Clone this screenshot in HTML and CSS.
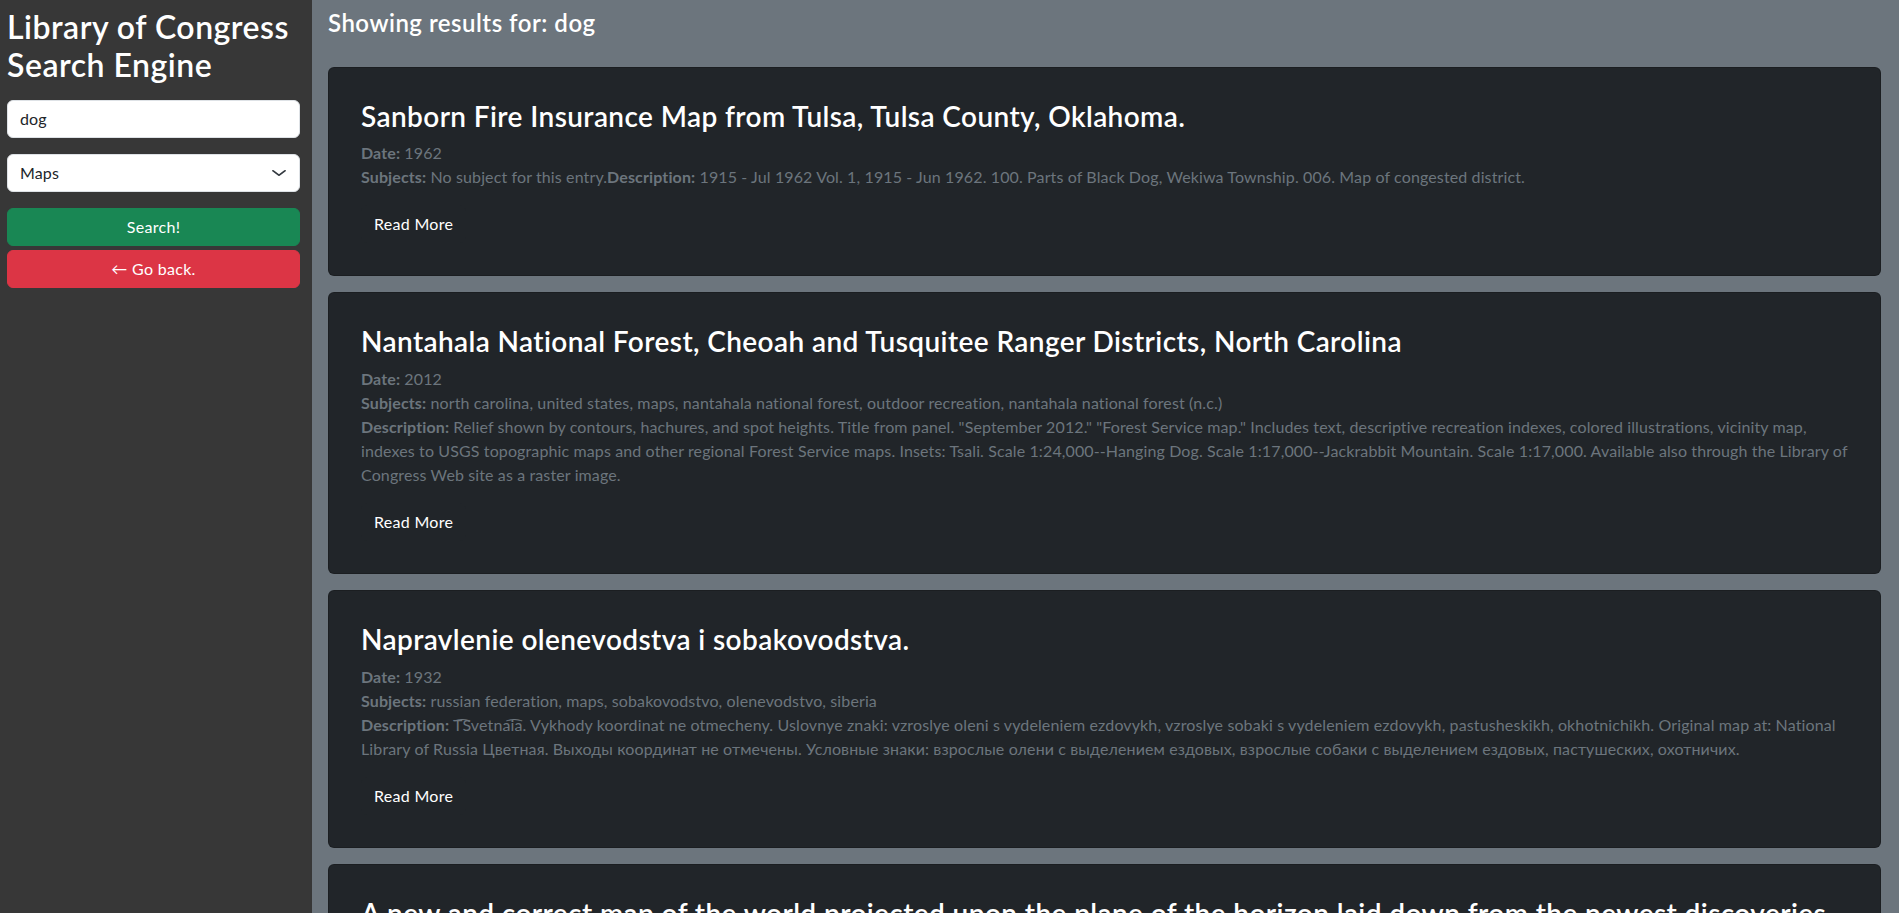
FILE: index.html
```html
<!DOCTYPE html>
<html lang="en">
<head>
<meta charset="utf-8">
<title>Library of Congress Search Engine</title>
<link rel="stylesheet" href="styles.css">
</head>
<body>
<aside class="sidebar">
  <h2 class="brand">Library of Congress Search Engine</h2>
  <form class="search-form">
    <input class="field" type="text" value="dog">
    <div class="field select">
      <span>Maps</span>
      <svg class="chevron" width="16" height="12" viewBox="0 0 16 16" preserveAspectRatio="none"><path d="m2 5 6 6 6-6" fill="none" stroke="#343a40" stroke-linecap="round" stroke-linejoin="round" stroke-width="2"/></svg>
    </div>
    <button class="btn btn-success" type="button">Search!</button>
    <button class="btn btn-danger" type="button">&larr; Go back.</button>
  </form>
</aside>
<main class="results">
  <h4 class="results-title">Showing results for: dog</h4>

  <div class="card">
    <h3 class="card-title">Sanborn Fire Insurance Map from Tulsa, Tulsa County, Oklahoma.</h3>
    <p class="meta"><b>Date:</b> 1962<br><b>Subjects:</b> No subject for this entry.<b>Description:</b> 1915 - Jul 1962 Vol. 1, 1915 - Jun 1962. 100. Parts of Black Dog, Wekiwa Township. 006. Map of congested district.</p>
    <button class="btn btn-read" type="button">Read More</button>
  </div>

  <div class="card">
    <h3 class="card-title">Nantahala National Forest, Cheoah and Tusquitee Ranger Districts, North Carolina</h3>
    <p class="meta"><b>Date:</b> 2012<br><b>Subjects:</b> north carolina, united states, maps, nantahala national forest, outdoor recreation, nantahala national forest (n.c.)<br><b>Description:</b> Relief shown by contours, hachures, and spot heights. Title from panel. "September 2012." "Forest Service map." Includes text, descriptive recreation indexes, colored illustrations, vicinity map, indexes to USGS topographic maps and other regional Forest Service maps. Insets: Tsali. Scale 1:24,000--Hanging Dog. Scale 1:17,000--Jackrabbit Mountain. Scale 1:17,000. Available also through the Library of Congress Web site as a raster image.</p>
    <button class="btn btn-read" type="button">Read More</button>
  </div>

  <div class="card">
    <h3 class="card-title">Napravlenie olenevodstva i sobakovodstva.</h3>
    <p class="meta"><b>Date:</b> 1932<br><b>Subjects:</b> russian federation, maps, sobakovodstvo, olenevodstvo, siberia<br><b>Description:</b> T͡Svetnai͡a. Vykhody koordinat ne otmecheny. Uslovnye znaki: vzroslye oleni s vydeleniem ezdovykh, vzroslye sobaki s vydeleniem ezdovykh, pastusheskikh, okhotnichikh. Original map at: National Library of Russia Цветная. Выходы координат не отмечены. Условные знаки: взрослые олени с выделением ездовых, взрослые собаки с выделением ездовых, пастушеских, охотничих.</p>
    <button class="btn btn-read" type="button">Read More</button>
  </div>

  <div class="card">
    <h3 class="card-title">A new and correct map of the world projected upon the plane of the horizon laid down from the newest discoveries and most exact observations</h3>
    <p class="meta"><b>Date:</b> 1702</p>
    <button class="btn btn-read" type="button">Read More</button>
  </div>
</main>
</body>
</html>
```
FILE: styles.css
```css
* { box-sizing: border-box; }

html, body {
  height: 100%;
}

body {
  margin: 0;
  display: flex;
  overflow: hidden;
  font-family: Lato, "Noto Sans", Arial, sans-serif;
  font-size: 16px;
  line-height: 1.5;
  letter-spacing: 0.12px;
  color: #dee2e6;
  background: #6c757d;
}

.sidebar {
  width: 312px;
  flex-shrink: 0;
  background: #373737;
  padding: 8px 12px 0 7px;
}

.brand {
  margin: 0 0 15px;
  font-size: 32px;
  font-weight: 600;
  line-height: 1.2;
  letter-spacing: 0.5px;
  color: #fff;
}

.search-form {
  display: flex;
  flex-direction: column;
}

.field {
  display: block;
  width: 100%;
  height: 38px;
  padding: 6px 12px;
  font: inherit;
  letter-spacing: inherit;
  color: #212529;
  background: #fff;
  border: 1px solid #dee2e6;
  border-radius: 6px;
  margin-bottom: 16px;
}

.select {
  display: flex;
  align-items: center;
  justify-content: space-between;
  line-height: 1.5;
}

.chevron {
  display: block;
}

.btn {
  display: block;
  height: 38px;
  padding: 6px 12px;
  font: inherit;
  letter-spacing: 0.3px;
  line-height: 1.5;
  border: 1px solid transparent;
  border-radius: 6px;
  color: #fff;
  text-align: center;
}

.btn-success {
  width: 100%;
  background: #198754;
  border-color: #198754;
}

.btn-danger {
  width: 100%;
  margin-top: 4px;
  background: #dc3545;
  border-color: #dc3545;
}

.results {
  flex: 1;
  min-width: 0;
  padding: 9px 18px 0 16px;
}

.results-title {
  margin: 0 0 29px;
  font-size: 24px;
  font-weight: 600;
  line-height: 1.2;
  letter-spacing: 0.5px;
  color: #fff;
}

.card {
  background: #212529;
  border: 1px solid rgba(0, 0, 0, 0.175);
  border-radius: 6px;
  padding: 32px;
  margin-bottom: 16px;
}

.card-title {
  margin: 0 0 8px;
  font-size: 28px;
  font-weight: 600;
  line-height: 1.2;
  letter-spacing: 0.4px;
  color: #fff;
}

.meta {
  margin: 0 0 16px;
  color: #6c757d;
}

.meta b {
  font-weight: 700;
}

.btn-read {
  background: #212529;
  border-color: #212529;
}
```
